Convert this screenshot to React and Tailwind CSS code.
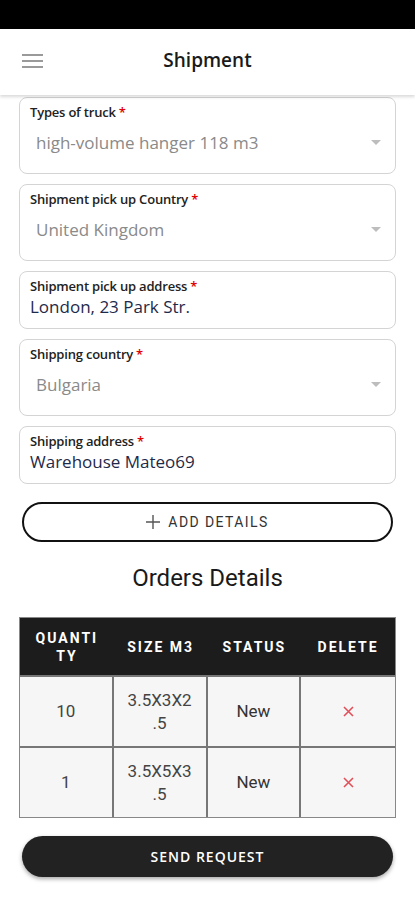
import React from "react";

const sans = { fontFamily: '"Open Sans", "Noto Sans", sans-serif' };

function Label({ text }) {
  return (
    <div className="text-[13px] leading-[16px] font-semibold text-[#222] tracking-[-0.2px]" style={sans}>
      {text}
      <span className="text-[#e00000] ml-[3px]">*</span>
    </div>
  );
}

function SelectField({ label, value }) {
  return (
    <div className="h-[77px] rounded-[8px] border border-[#d4d4d4] bg-white px-[10px] pt-[6px]">
      <Label text={label} />
      <div className="flex items-center justify-between pl-[6px] pr-[4px] mt-[12px]">
        <span className="text-[17px] leading-[22px] text-[#8a8a8a]" style={sans}>{value}</span>
        <svg width="10" height="6" viewBox="0 0 10 6">
          <path d="M0 0 L10 0 L5 5 Z" fill="#bdbdbd" />
        </svg>
      </div>
    </div>
  );
}

function TextField({ label, value }) {
  return (
    <div className="h-[58px] rounded-[8px] border border-[#d4d4d4] bg-white px-[10px] pt-[6px]">
      <Label text={label} />
      <div className="text-[17px] leading-[22px] text-[#1e2a4a] mt-[2px]" style={sans}>{value}</div>
    </div>
  );
}

export default function App() {
  const roboto = { fontFamily: 'Roboto, "Liberation Sans", sans-serif' };
  const rows = [
    { q: "10", s: ["3.5X3X2", ".5"] },
    { q: "1", s: ["3.5X5X3", ".5"] },
  ];
  return (
    <div className="w-[415px] min-h-[900px] bg-white flex flex-col">
      <div className="h-[29px] bg-black" />
      <div className="h-[66px] bg-white flex items-center relative shadow-[0_2px_3px_rgba(0,0,0,0.15)] z-10">
        <div className="absolute left-[22px] top-[25px] flex flex-col gap-[4px]">
          <div className="w-[21px] h-[2px] bg-[#9a9a9a]" />
          <div className="w-[21px] h-[2px] bg-[#9a9a9a]" />
          <div className="w-[21px] h-[2px] bg-[#9a9a9a]" />
        </div>
        <div className="w-full text-center text-[19px] leading-[24px] font-semibold text-[#1a1a1a] -mt-[4px]" style={sans}>
          Shipment
        </div>
      </div>
      <div className="px-[19px] pt-[2px] flex flex-col gap-[10px]">
        <SelectField label="Types of truck" value="high-volume hanger 118 m3" />
        <SelectField label="Shipment pick up Country" value="United Kingdom" />
        <TextField label="Shipment pick up address" value="London, 23 Park Str." />
        <SelectField label="Shipping country" value="Bulgaria" />
        <TextField label="Shipping address" value="Warehouse Mateo69" />
      </div>
      <div className="px-[22px] mt-[18px]">
        <div className="h-[40px] rounded-full border-2 border-[#111] flex items-center justify-center gap-[8px] text-[#333]">
          <svg width="14" height="14" viewBox="0 0 14 14">
            <path d="M7 0 V14 M0 7 H14" stroke="#555" strokeWidth="1.4" />
          </svg>
          <span className="text-[14px] tracking-[1.4px]" style={roboto}>ADD DETAILS</span>
        </div>
      </div>
      <div className="text-center text-[24px] text-[#1a1a1a] mt-[21px] leading-[30px]" style={roboto}>
        Orders Details
      </div>
      <div className="px-[19px] mt-[24px]">
        <div className="grid grid-cols-4 border border-[#888]" style={roboto}>
          {["QUANTI TY", "SIZE M3", "STATUS", "DELETE"].map((h) => (
            <div
              key={h}
              className="h-[57px] bg-[#1c1c1c] flex items-center justify-center text-center text-white font-bold text-[14px] leading-[18px] tracking-[2px] px-[4px]"
            >
              {h === "QUANTI TY" ? (
                <span>QUANTI<br />TY</span>
              ) : (
                h
              )}
            </div>
          ))}
          {rows.map((r, ri) => (
            <React.Fragment key={ri}>
              <div className="h-[71px] bg-[#f6f6f6] border-r-2 border-t-2 border-[#777] flex items-center justify-center text-[17px] text-[#444]">
                {r.q}
              </div>
              <div className="h-[71px] bg-[#f6f6f6] border-r-2 border-t-2 border-[#777] flex flex-col items-center justify-center text-[17px] leading-[23px] text-[#444]">
                <span>{r.s[0]}</span>
                <span>{r.s[1]}</span>
              </div>
              <div className="h-[71px] bg-[#f6f6f6] border-r-2 border-t-2 border-[#777] flex items-center justify-center text-[17px] text-[#333]">
                New
              </div>
              <div className="h-[71px] bg-[#f6f6f6] border-t-2 border-[#777] flex items-center justify-center">
                <svg width="11" height="11" viewBox="0 0 11 11">
                  <path d="M1 1 L10 10 M10 1 L1 10" stroke="#e0505a" strokeWidth="1.6" />
                </svg>
              </div>
            </React.Fragment>
          ))}
        </div>
      </div>
      <div className="px-[22px] mt-[18px]">
        <div className="h-[41px] rounded-full bg-[#222] shadow-[0_2px_4px_rgba(0,0,0,0.35)] flex items-center justify-center">
          <span className="text-white text-[14px] font-semibold tracking-[1px]" style={sans}>SEND REQUEST</span>
        </div>
      </div>
    </div>
  );
}
